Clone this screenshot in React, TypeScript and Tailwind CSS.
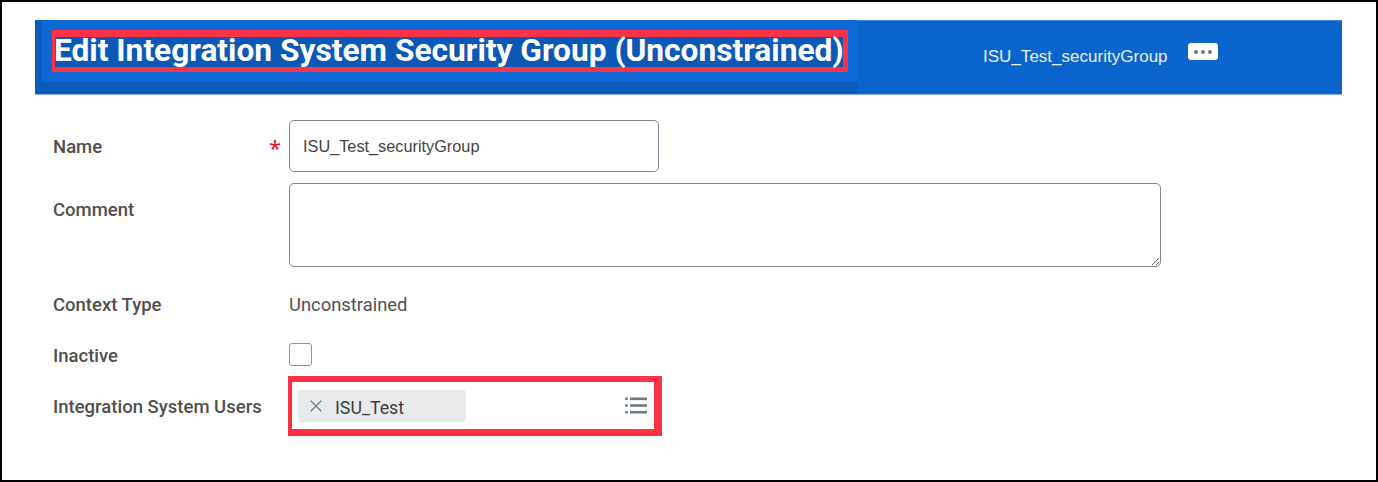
import { X } from "lucide-react";

const roboto = "font-['Roboto',sans-serif]";
const helvetica = "font-['Liberation_Sans',sans-serif]";

function Label({ children, required }: { children: string; required?: boolean }) {
  return (
    <div className="flex w-[236px] shrink-0 items-center justify-between pr-[8px]">
      <span className={`${roboto} block h-[24px] text-[18.5px] leading-[26px] font-medium whitespace-nowrap text-[#505050]`}>
        {children}
      </span>
      {required ? <span className="mt-[2px] text-[22px] leading-[24px] text-[#e8121f]">*</span> : null}
    </div>
  );
}

function ListIcon() {
  return (
    <svg width="22" height="17" viewBox="0 0 22 17" className="text-[#6f7b87]">
      <g fill="currentColor">
        <rect x="0" y="0.5" width="3" height="2.6" rx="1" />
        <rect x="0" y="7.2" width="3" height="2.6" rx="1" />
        <rect x="0" y="13.9" width="3" height="2.6" rx="1" />
        <rect x="5" y="0.5" width="17" height="2.6" />
        <rect x="5" y="7.2" width="17" height="2.6" />
        <rect x="5" y="13.9" width="17" height="2.6" />
      </g>
    </svg>
  );
}

export default function App() {
  return (
    <div className="h-[482px] w-[1378px] overflow-hidden border-2 border-black bg-white">
      {/* Page header */}
      <div className="mt-[18px] ml-[33px] flex h-[75px] w-[1307px] border-b border-[#8fb0dd] bg-[#0b63cc]">
        <div className="h-full w-[823px] shrink-0 border-b-[12px] border-l-[7px] border-[#0a5cbb] bg-[#0d67d4] pt-[10px] pl-[10px]">
          <div className="flex h-[42px] w-[796px] items-center border-t-[7px] border-r-[5px] border-b-[5px] border-l-[3px] border-[#fd3244] bg-[#0b59b4]">
            <h1 className={`${roboto} -ml-[1px] pb-[2px] text-[31.7px] leading-none font-bold whitespace-nowrap text-white`}>
              Edit Integration System Security Group (Unconstrained)
            </h1>
          </div>
        </div>
        <div className="flex h-[74px] grow items-start border-t border-[#3f80d8] pl-[125px]">
          <span className={`${helvetica} mt-[25px] text-[17.05px] leading-[22px] whitespace-nowrap text-[#e8f0fb]`}>
            ISU_Test_securityGroup
          </span>
          <button
            type="button"
            className="mt-[22px] ml-[20px] flex h-[17px] w-[30px] items-center justify-center gap-[3px] rounded-[3px] bg-white"
          >
            <span className="h-[4px] w-[4px] rounded-full bg-[#6f7b87]" />
            <span className="h-[4px] w-[4px] rounded-full bg-[#6f7b87]" />
            <span className="h-[4px] w-[4px] rounded-full bg-[#6f7b87]" />
          </button>
        </div>
      </div>

      {/* Form */}
      <div className="pl-[51px]">
        <div className="mt-[25px] flex items-center">
          <Label required>Name</Label>
          <div className="flex h-[52px] w-[370px] items-center rounded-[5px] border border-[#7b8793] pl-[13px]">
            <span className={`${helvetica} text-[16.3px] text-[#444444]`}>ISU_Test_securityGroup</span>
          </div>
        </div>

        <div className="mt-[11px] flex items-start">
          <div className="pt-[14px]">
            <Label>Comment</Label>
          </div>
          <textarea
            aria-label="Comment"
            className="block h-[84px] w-[872px] rounded-[5px] border border-[#7b8793] bg-white"
          />
        </div>

        <div className="mt-[25px] flex items-center">
          <Label>Context Type</Label>
          <span className={`${roboto} block h-[24px] text-[18.4px] leading-[26px] text-[#505050]`}>Unconstrained</span>
        </div>

        <div className="mt-[27px] flex items-start">
          <Label>Inactive</Label>
          <div className="h-[23px] w-[23px] rounded-[3px] border border-[#8b95a0] bg-white" />
        </div>

        <div className="mt-[9px] flex items-center">
          <Label>Integration System Users</Label>
          <div className="-ml-[1px] flex h-[60px] w-[374px] items-center justify-between border-t-[6px] border-r-[8px] border-b-[7px] border-l-[4px] border-[#fd3244] bg-white pr-[7px] pl-[6px]">
            <div className="flex h-[32px] w-[168px] items-center rounded-[3px] bg-[#e9eaec] pl-[8px]">
              <X size={20} strokeWidth={1.5} className="text-[#6f7b87]" />
              <span className={`${roboto} ml-[9px] block h-[24px] text-[17.8px] leading-[27px] text-[#3d3d3d]`}>ISU_Test</span>
            </div>
            <ListIcon />
          </div>
        </div>
      </div>
    </div>
  );
}
